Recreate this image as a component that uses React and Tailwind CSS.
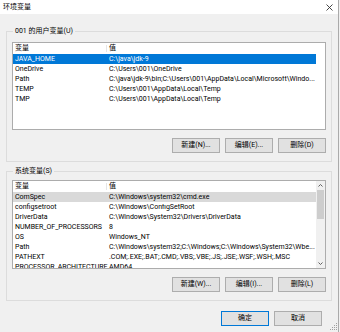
import React from 'react';

const USER_VARS = [
  ['JAVA_HOME', 'C:\\java\\jdk-9'],
  ['OneDrive', 'C:\\Users\\001\\OneDrive'],
  ['Path', 'C:\\java\\jdk-9\\bin;C:\\Users\\001\\AppData\\Local\\Microsoft\\Windo...'],
  ['TEMP', 'C:\\Users\\001\\AppData\\Local\\Temp'],
  ['TMP', 'C:\\Users\\001\\AppData\\Local\\Temp'],
];

const SYSTEM_VARS = [
  ['ComSpec', 'C:\\Windows\\system32\\cmd.exe'],
  ['configsetroot', 'C:\\Windows\\ConfigSetRoot'],
  ['DriverData', 'C:\\Windows\\System32\\Drivers\\DriverData'],
  ['NUMBER_OF_PROCESSORS', '8'],
  ['OS', 'Windows_NT'],
  ['Path', 'C:\\Windows\\system32;C:\\Windows;C:\\Windows\\System32\\Wbe...'],
  ['PATHEXT', '.COM;.EXE;.BAT;.CMD;.VBS;.VBE;.JS;.JSE;.WSF;.WSH;.MSC'],
  ['PROCESSOR_ARCHITECTURE', 'AMD64'],
];

const Row = ({ name, value, state }) => {
  const bg =
    state === 'active'
      ? 'bg-[#0078d7] text-white'
      : state === 'inactive'
      ? 'bg-[#d9d9d9] text-black'
      : 'text-black';
  return (
    <div className={`flex h-[10px] w-[303px] shrink-0 items-center leading-none ${bg}`}>
      <div className="w-[94px] shrink-0 whitespace-nowrap pl-[2px]">{name}</div>
      <div className="flex-1 whitespace-nowrap overflow-hidden pl-[2px]">{value}</div>
    </div>
  );
};

const VarList = ({ rows, selected, height, scroll }) => (
  <div className={`flex border border-[#acacac] bg-white overflow-hidden ${height}`}>
    <div className="flex min-w-0 flex-1 flex-col">
      {/* header */}
      <div className="flex h-[11px] shrink-0 items-center leading-none text-black">
        <div className="w-[94px] shrink-0 border-r border-[#e5e5e5] pl-[2px]">变量</div>
        <div className="pl-[2px]">值</div>
      </div>
      {rows.map(([n, v], i) => (
        <Row key={n + i} name={n} value={v} state={i === 0 ? selected : null} />
      ))}
    </div>
    {scroll && (
      <div className="flex w-[9px] shrink-0 flex-col items-center bg-[#f0f0f0]">
        <svg width="9" height="9" viewBox="0 0 9 9" className="shrink-0">
          <path d="M2.5 5.5 L4.5 3.5 L6.5 5.5" fill="none" stroke="#606060" strokeWidth="1" />
        </svg>
        <div className="h-[29px] w-[7px] shrink-0 bg-[#cdcdcd]" />
        <div className="flex-1" />
        <svg width="9" height="9" viewBox="0 0 9 9" className="shrink-0">
          <path d="M2.5 3.5 L4.5 5.5 L6.5 3.5" fill="none" stroke="#606060" strokeWidth="1" />
        </svg>
      </div>
    )}
  </div>
);

const Btn = ({ children, primary }) => (
  <button
    className={`flex h-[15px] w-[48px] items-center justify-center bg-[#e1e1e1] leading-none text-black ${
      primary ? 'border border-[#0078d7]' : 'border border-[#adadad]'
    }`}
  >
    {children}
  </button>
);

const Group = ({ label, children, className }) => (
  <fieldset className={`border border-[#dcdcdc] px-[5px] ${className}`}>
    <legend className="ml-[1px] px-[2px] h-[10px] leading-[10px] text-black">{label}</legend>
    {children}
  </fieldset>
);

export default function App() {
  return (
    <div
      className="relative h-[332px] w-[340px] overflow-hidden bg-[#f0f0f0] text-[7px]"
      style={{ fontFamily: 'Roboto, "Noto Sans CJK SC", sans-serif' }}
    >
      <div className="h-[332px] w-[339px] border-r border-[#aaaaaa]">
        {/* title bar */}
        <div className="flex h-[14px] items-center justify-between bg-white pl-[3px] pr-[5px]">
          <span className="text-[7px] leading-none text-black">环境变量</span>
          <svg width="7" height="7" viewBox="0 0 7 7">
            <path d="M0.5 0.5 L6.5 6.5 M6.5 0.5 L0.5 6.5" stroke="#333" strokeWidth="0.9" />
          </svg>
        </div>

        <div className="pl-[6px] pr-[6px]">
          <Group label="001 的用户变量(U)" className="mt-[12px] pt-[6px] pb-[8px]">
            <VarList rows={USER_VARS} selected="active" height="h-[88px]" />
            <div className="mt-[8px] flex justify-end gap-[5px]">
              <Btn>新建(N)...</Btn>
              <Btn>编辑(E)...</Btn>
              <Btn>删除(D)</Btn>
            </div>
          </Group>

          <Group label="系统变量(S)" className="mt-[4px] pt-[4px] pb-[8px]">
            <VarList rows={SYSTEM_VARS} selected="inactive" height="h-[89px]" scroll />
            <div className="mt-[8px] flex justify-end gap-[5px]">
              <Btn>新建(W)...</Btn>
              <Btn>编辑(I)...</Btn>
              <Btn>删除(L)</Btn>
            </div>
          </Group>

          <div className="mt-[10px] flex justify-end gap-[5px] pr-[10px]">
            <Btn primary>确定</Btn>
            <Btn>取消</Btn>
          </div>
        </div>
      </div>

      {/* resize grip */}
      <svg className="absolute bottom-[1px] right-[2px]" width="8" height="8" viewBox="0 0 8 8">
        <rect x="6" y="0" width="1" height="1" fill="#a0a0a0" />
        <rect x="4" y="2" width="1" height="1" fill="#a0a0a0" />
        <rect x="6" y="2" width="1" height="1" fill="#a0a0a0" />
        <rect x="2" y="4" width="1" height="1" fill="#a0a0a0" />
        <rect x="4" y="4" width="1" height="1" fill="#a0a0a0" />
        <rect x="6" y="4" width="1" height="1" fill="#a0a0a0" />
        <rect x="0" y="6" width="1" height="1" fill="#a0a0a0" />
        <rect x="2" y="6" width="1" height="1" fill="#a0a0a0" />
        <rect x="4" y="6" width="1" height="1" fill="#a0a0a0" />
        <rect x="6" y="6" width="1" height="1" fill="#a0a0a0" />
      </svg>
    </div>
  );
}
